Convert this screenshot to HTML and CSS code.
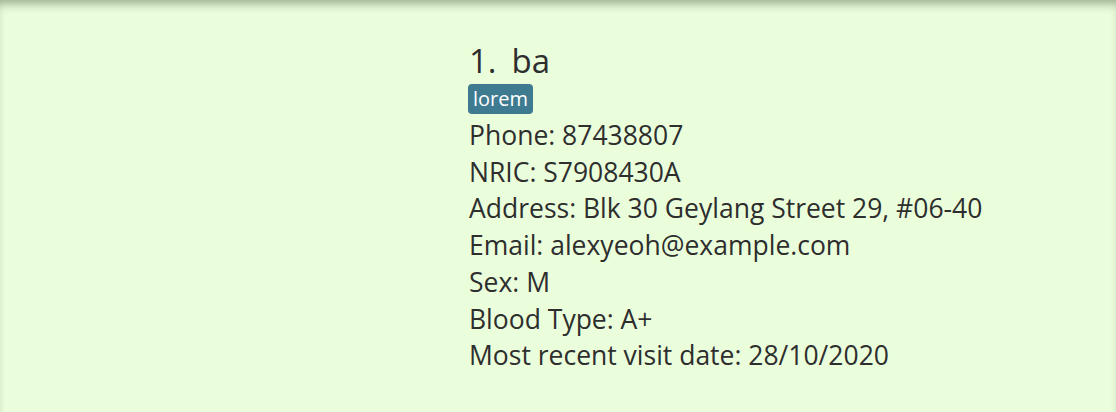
FILE: index.html
```html
<!DOCTYPE html>
<html>
<head>
<meta charset="utf-8">
<link rel="stylesheet" href="styles.css">
</head>
<body>
<div class="panel">
  <div class="card">
    <div class="title"><span class="idx">1.</span><span class="name">ba</span></div>
    <div class="tags"><span class="tag">lorem</span></div>
    <div class="field">Phone: 87438807</div>
    <div class="field">NRIC: S7908430A</div>
    <div class="field">Address: Blk 30 Geylang Street 29, #06-40</div>
    <div class="field">Email: alexyeoh@example.com</div>
    <div class="field">Sex: M</div>
    <div class="field">Blood Type: A+</div>
    <div class="field">Most recent visit date: 28/10/2020</div>
  </div>
</div>
</body>
</html>
```
FILE: styles.css
```css
html, body {
  margin: 0;
  padding: 0;
}
body {
  width: 1116px;
  height: 412px;
  overflow: hidden;
  background: #ebfedc;
  font-family: "Open Sans", "Noto Sans", sans-serif;
  color: #2e2e2e;
}
.panel {
  height: 412px;
  box-sizing: border-box;
  box-shadow: inset 0 8px 10px -4px rgba(60, 80, 50, 0.45);
  padding: 38px 0 0 469px;
}
.card {
  display: flex;
  flex-direction: column;
  align-items: flex-start;
}
.title {
  font-size: 33px;
  line-height: 46px;
  display: flex;
  gap: 15px;
}
.tags {
  margin: 0 0 3px -1px;
}
.tag {
  display: inline-block;
  background: #3e7b91;
  color: #ffffff;
  font-size: 20px;
  line-height: 30px;
  padding: 0 5px 0 5px;
  border-radius: 4px;
}
.field {
  font-size: 26.5px;
  line-height: 36.7px;
}
```
